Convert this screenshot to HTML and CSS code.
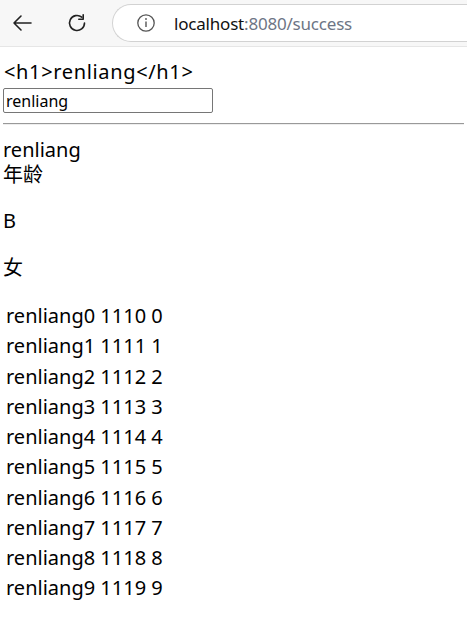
FILE: index.html
```html
<!DOCTYPE html>
<html>
<head>
<meta charset="utf-8">
<link rel="stylesheet" href="styles.css">
</head>
<body>
<div class="chrome">
  <span class="btn back">
    <svg width="22" height="22" viewBox="0 0 22 22"><path d="M20 11H3M10 4L3 11l7 7" fill="none" stroke="#222" stroke-width="1.6" stroke-linecap="round" stroke-linejoin="round"/></svg>
  </span>
  <span class="btn reload">
    <svg width="22" height="22" viewBox="0 0 22 22"><path d="M18.5 11A7.5 7.5 0 1 1 15.8 5.2" fill="none" stroke="#222" stroke-width="1.6" stroke-linecap="round"/><path d="M17.2 2.8v4.4h-4.4" fill="none" stroke="#222" stroke-width="1.6" stroke-linecap="round" stroke-linejoin="round"/></svg>
  </span>
  <div class="pill">
    <svg class="info" width="20" height="20" viewBox="0 0 20 20"><circle cx="10" cy="10" r="8.2" fill="none" stroke="#555" stroke-width="1.3"/><path d="M10 8.5v5.5" stroke="#555" stroke-width="1.4"/><circle cx="10" cy="6" r="0.9" fill="#555"/></svg>
    <span class="url"><span class="host">localhost</span><span class="rest">:8080/success</span></span>
  </div>
</div>
<main class="page">
  <div class="title">&lt;h1&gt;renliang&lt;/h1&gt;</div>
  <input class="field" type="text" value="renliang">
  <hr class="rule">
  <div class="line first">renliang</div>
  <div class="line">年龄</div>
  <p class="para pb">B</p>
  <p class="para pg">女</p>
  <table class="list">
    <tr><td>renliang0 1110 0</td></tr>
    <tr><td>renliang1 1111 1</td></tr>
    <tr><td>renliang2 1112 2</td></tr>
    <tr><td>renliang3 1113 3</td></tr>
    <tr><td>renliang4 1114 4</td></tr>
    <tr><td>renliang5 1115 5</td></tr>
    <tr><td>renliang6 1116 6</td></tr>
    <tr><td>renliang7 1117 7</td></tr>
    <tr><td>renliang8 1118 8</td></tr>
    <tr><td>renliang9 1119 9</td></tr>
  </table>
</main>
</body>
</html>
```
FILE: styles.css
```css
html, body { margin: 0; padding: 0; background: #fff; }
body { font-family: "Noto Sans", "Noto Sans CJK SC", sans-serif; color: #000; overflow: hidden; }
.chrome {
  height: 46px;
  background: #f7f7f7;
  border-bottom: 1px solid #e6e6e6;
  display: flex;
  align-items: center;
}
.btn { display: flex; width: 22px; height: 22px; }
.back { margin-left: 11px; }
.reload { margin-left: 33px; }
.pill {
  margin-left: 24px;
  flex: 1;
  height: 36px;
  background: #fff;
  border: 1px solid #d2d2d2;
  border-right: 0;
  border-radius: 19px 0 0 19px;
  display: flex;
  align-items: center;
}
.info { margin-left: 23px; }
.url { margin-left: 18px; font-size: 17px; letter-spacing: -0.2px; }
.host { color: #111; }
.rest { color: #6d7585; }
.page { padding: 12px 3px 0 3px; font-size: 20px; }
.title { line-height: 26px; padding-left: 1px; letter-spacing: 0.65px; }
.field {
  display: block;
  margin: 3px 0 0 0;
  width: 210px;
  height: 25px;
  box-sizing: border-box;
  border: 1px solid #767676;
  border-radius: 2px;
  padding: 0 2px;
  font-family: "Noto Sans", sans-serif;
  font-size: 16px;
  color: #000;
}
.rule { margin: 10px 0 0 0; border: 0; border-top: 1px solid #999; border-bottom: 1px solid #eee; }
.line { line-height: 25px; }
.first { margin-top: 12px; }
.para { margin: 0; line-height: 25px; }
.pb { margin-top: 21px; }
.pg { margin-top: 22px; }
.list { border-collapse: separate; border-spacing: 2px; margin-top: 20px; font-size: 20px; }
.list td { padding: 1px; line-height: 26.25px; }
```
